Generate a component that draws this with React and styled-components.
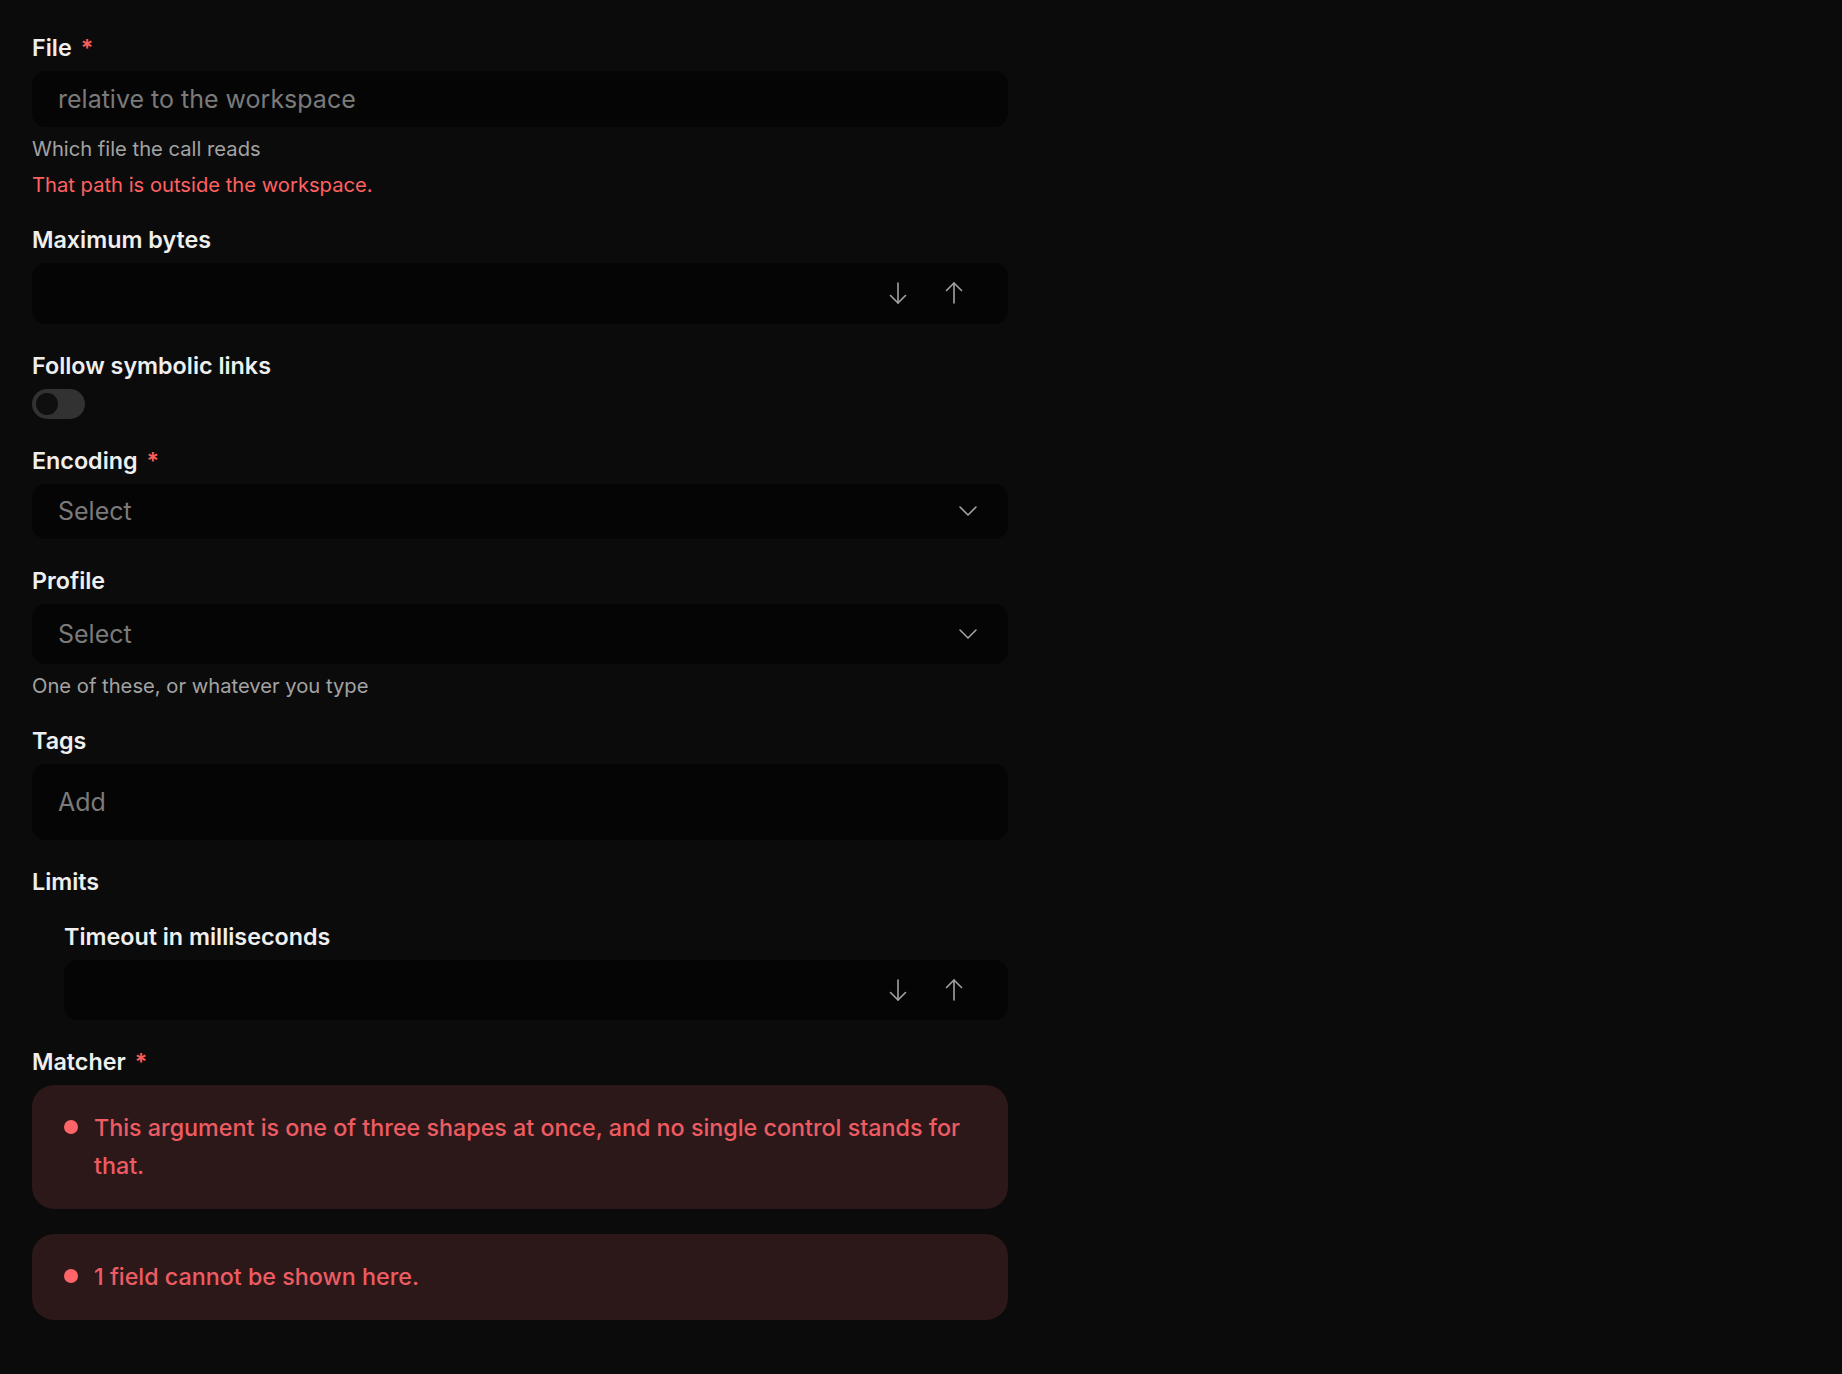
import React from 'react';
import styled, { createGlobalStyle } from 'styled-components';

const GlobalStyle = createGlobalStyle`
  html, body { margin: 0; padding: 0; background: #0b0b0b; }
  body {
    font-family: Inter, "Noto Sans", "Liberation Sans", sans-serif;
    color: #ededed;
    -webkit-font-smoothing: antialiased;
  }
  * { box-sizing: border-box; }
`;

const Page = styled.div`
  min-height: 100vh;
  background: #0b0b0b;
  padding: 33px 32px;
`;

const Form = styled.form`
  width: 976px;
  display: flex;
  flex-direction: column;
  gap: 27px;
`;

const Field = styled.div`
  display: flex;
  flex-direction: column;
`;

const Label = styled.label`
  font-size: 23.3px;
  line-height: 30px;
  font-weight: 600;
  color: #efefef;
  margin-bottom: 8px;
`;

const Required = styled.span`
  color: #ff5c5c;
  margin-left: 9px;
`;

const Box = styled.div`
  height: ${(p) => p.$h}px;
  background: #050505;
  border-radius: 14px;
  display: flex;
  align-items: center;
  padding-left: 26px;
`;

const TextInput = styled.input`
  flex: 1;
  min-width: 0;
  height: 100%;
  background: transparent;
  border: none;
  outline: none;
  padding: 0;
  font-family: inherit;
  font-size: 25px;
  color: #ededed;
  &::placeholder { color: #7a7a7a; }
`;

const Stepper = styled.div`
  display: flex;
  gap: 20px;
  padding-right: 36px;
`;

const StepButton = styled.button`
  width: 36px;
  height: 36px;
  display: flex;
  align-items: center;
  justify-content: center;
  background: transparent;
  border: none;
  padding: 0;
  cursor: pointer;
`;

const SelectBox = styled(Box)`
  justify-content: space-between;
  padding-right: 31px;
  cursor: pointer;
`;

const SelectText = styled.span`
  font-size: 25px;
  color: #7a7a7a;
`;

const Helper = styled.div`
  margin-top: 8px;
  font-size: 20.2px;
  line-height: 27px;
  color: #a3a3a3;
`;

const ErrorText = styled.div`
  margin-top: 9px;
  font-size: 20.2px;
  line-height: 27px;
  color: #ff6161;
`;

const Toggle = styled.button`
  width: 53px;
  height: 30px;
  border-radius: 15px;
  background: #323232;
  border: none;
  padding: 0 4px;
  display: flex;
  align-items: center;
  cursor: pointer;
`;

const Thumb = styled.span`
  width: 22px;
  height: 22px;
  border-radius: 50%;
  background: #0f0f0f;
`;

const Group = styled.div`
  display: flex;
  flex-direction: column;
  gap: 25px;
`;

const GroupTitle = styled(Label)`
  margin-bottom: 0;
`;

const Nested = styled.div`
  padding-left: 32px;
  display: flex;
  flex-direction: column;
`;

const Callouts = styled.div`
  display: flex;
  flex-direction: column;
  gap: 24.5px;
`;

const Callout = styled.div`
  background: #2c1818;
  border-radius: 22px;
  padding: 24px 32px;
  display: flex;
  align-items: flex-start;
  gap: 16px;
`;

const Dot = styled.span`
  flex: none;
  width: 14px;
  height: 14px;
  margin-top: 11px;
  border-radius: 50%;
  background: #ff6468;
`;

const CalloutText = styled.div`
  font-size: 23.3px;
  line-height: 38px;
  font-weight: 500;
  color: #ee5c63;
`;

const ArrowDown = () => (
  <svg width="18" height="22" viewBox="0 0 18 22" fill="none" stroke="#a3a3a3" strokeWidth="1.6" strokeLinecap="round" strokeLinejoin="round">
    <path d="M9 1v20" />
    <path d="M1.5 13.5 9 21l7.5-7.5" />
  </svg>
);

const ArrowUp = () => (
  <svg width="18" height="22" viewBox="0 0 18 22" fill="none" stroke="#a3a3a3" strokeWidth="1.6" strokeLinecap="round" strokeLinejoin="round">
    <path d="M9 21V1" />
    <path d="M1.5 8.5 9 1l7.5 7.5" />
  </svg>
);

const Chevron = () => (
  <svg width="18" height="10" viewBox="0 0 18 10" fill="none" stroke="#a8a8a8" strokeWidth="1.5" strokeLinecap="round" strokeLinejoin="round">
    <path d="M1 1l8 8 8-8" />
  </svg>
);

const NumberField = ({ label }) => (
  <Field>
    <Label>{label}</Label>
    <Box $h={60.5}>
      <TextInput type="text" inputMode="numeric" />
      <Stepper>
        <StepButton type="button" aria-label="Decrease"><ArrowDown /></StepButton>
        <StepButton type="button" aria-label="Increase"><ArrowUp /></StepButton>
      </Stepper>
    </Box>
  </Field>
);

const SelectField = ({ label, required, h, helper }) => (
  <Field>
    <Label>
      {label}
      {required && <Required>*</Required>}
    </Label>
    <SelectBox $h={h}>
      <SelectText>Select</SelectText>
      <Chevron />
    </SelectBox>
    {helper && <Helper>{helper}</Helper>}
  </Field>
);

export default function App() {
  return (
    <Page>
      <GlobalStyle />
      <Form onSubmit={(e) => e.preventDefault()}>
        <Field>
          <Label>
            File<Required>*</Required>
          </Label>
          <Box $h={56}>
            <TextInput placeholder="relative to the workspace" />
          </Box>
          <Helper>Which file the call reads</Helper>
          <ErrorText>That path is outside the workspace.</ErrorText>
        </Field>

        <NumberField label="Maximum bytes" />

        <Field>
          <Label>Follow symbolic links</Label>
          <Toggle type="button" aria-label="Follow symbolic links">
            <Thumb />
          </Toggle>
        </Field>

        <SelectField label="Encoding" required h={55.5} />
        <SelectField label="Profile" h={59.5} helper="One of these, or whatever you type" />

        <Field>
          <Label>Tags</Label>
          <Box $h={76}>
            <TextInput placeholder="Add" />
          </Box>
        </Field>

        <Group>
          <GroupTitle>Limits</GroupTitle>
          <Nested>
            <NumberField label="Timeout in milliseconds" />
          </Nested>
        </Group>

        <Field>
          <Label>
            Matcher<Required>*</Required>
          </Label>
          <Callouts>
            <Callout>
              <Dot />
              <CalloutText>
                This argument is one of three shapes at once, and no single control stands for that.
              </CalloutText>
            </Callout>
            <Callout>
              <Dot />
              <CalloutText>1 field cannot be shown here.</CalloutText>
            </Callout>
          </Callouts>
        </Field>
      </Form>
    </Page>
  );
}
